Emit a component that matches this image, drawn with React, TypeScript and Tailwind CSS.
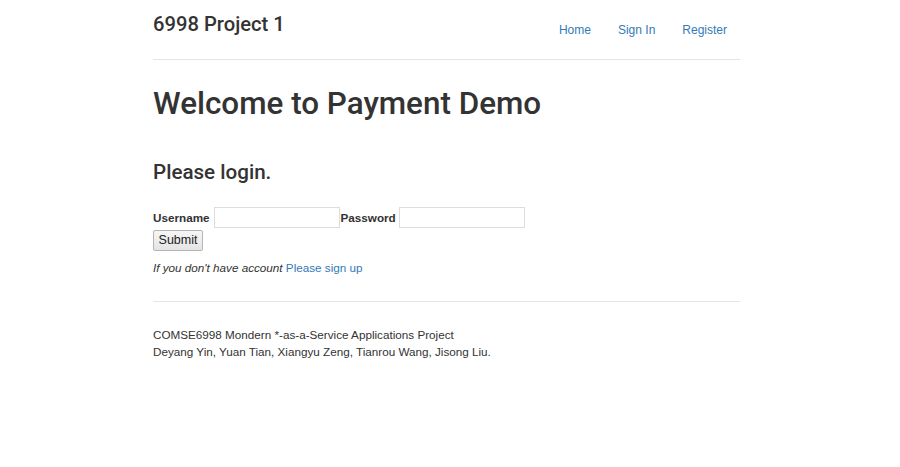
import React from "react";

const navLinks = ["Home", "Sign In", "Register"];

export default function App() {
  return (
    <div className="min-h-screen bg-white font-['Helvetica_Neue','Liberation_Sans',Arial,sans-serif] text-[11.7px] leading-[17px] text-[#333]">
      <div className="ml-[153px] w-[587px]">
        <header className="flex h-[60px] items-start justify-between border-b border-[#e5e5e5]">
          <h3 className="mt-[12px] font-['Roboto',sans-serif] text-[20.2px] font-medium leading-[24px]">6998 Project 1</h3>
          <nav className="mt-[22px] flex gap-[1px]">
            {navLinks.map((l) => (
              <a key={l} href="#" className="px-[13px] text-[12px] leading-[17px] text-[#337ab7]">
                {l}
              </a>
            ))}
          </nav>
        </header>

        <h1 className="mt-[26px] font-['Roboto',sans-serif] text-[31.4px] font-medium leading-[36px]">
          Welcome to Payment Demo
        </h1>

        <h3 className="mt-[38px] font-['Roboto',sans-serif] text-[20.6px] font-medium leading-[24px]">Please login.</h3>

        <form className="mt-[23px]" onSubmit={(e) => e.preventDefault()}>
          <div className="flex items-center">
            <label className="font-bold">Username</label>
            <input
              type="text"
              className="ml-[4px] h-[21px] w-[126px] border border-[#ddd] bg-white outline-none"
            />
            <label className="ml-[1px] font-bold">Password</label>
            <input
              type="password"
              className="ml-[3px] h-[21px] w-[126px] border border-[#ddd] bg-white outline-none"
            />
          </div>
          <button
            type="submit"
            className="mt-[2px] h-[21px] w-[50px] rounded-[2px] border border-[#b5b5b5] bg-gradient-to-b from-[#f6f6f6] to-[#e4e4e4] text-[12.5px] leading-[17px] text-[#222]"
          >
            Submit
          </button>
        </form>

        <p className="mt-[8px] italic">
          If you don't have account{" "}
          <a href="#" className="not-italic text-[#337ab7]">
            Please sign up
          </a>
        </p>

        <footer className="mt-[25px] border-t border-[#e5e5e5] pt-[24px]">
          <p>COMSE6998 Mondern *-as-a-Service Applications Project</p>
          <p>Deyang Yin, Yuan Tian, Xiangyu Zeng, Tianrou Wang, Jisong Liu.</p>
        </footer>
      </div>
    </div>
  );
}
